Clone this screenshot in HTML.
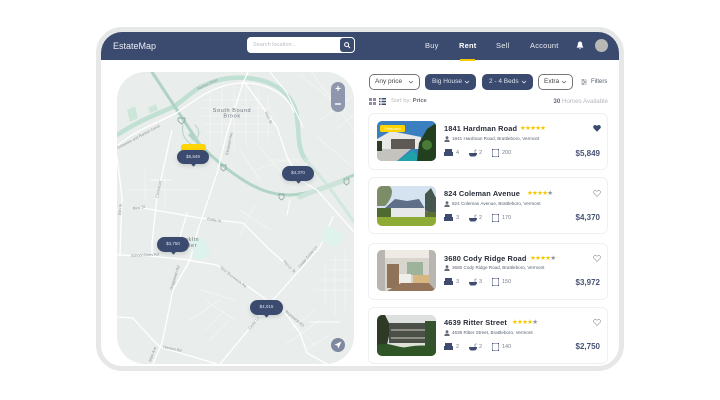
<!DOCTYPE html>
<html><head><meta charset="utf-8"><style>
*{box-sizing:border-box;margin:0;padding:0}
html,body{width:720px;height:400px;background:#fff;overflow:hidden;font-family:"Liberation Sans",sans-serif}
.a{position:absolute;white-space:nowrap}
#frame{left:96px;top:27px;width:528px;height:344px;border:5px solid #e6e8e7;border-radius:26px;background:#fff}
#hdr{left:101px;top:32px;width:518px;height:28px;background:#3b4a6f;border-radius:21px 21px 0 0}
.nav{color:#e8ebf2;font-size:7.5px;top:41px;letter-spacing:.2px}
.pill{top:74px;height:16px;border-radius:5px;font-size:6.5px;line-height:14px;padding-left:5px;border:1px solid #777;color:#444}
.pill.d{background:#3b4a6f;border-color:#3b4a6f;color:#dfe3ec;padding-left:6px}
.pill svg{position:absolute;right:5px;top:5px}
.card{left:368px;width:240px;height:57px;background:#fff;border:1px solid #eff0f2;border-radius:6px}
.t{left:444px;font-size:7.4px;font-weight:bold;color:#2a2e3a;letter-spacing:.12px}
.s{font-size:6.3px;letter-spacing:-.6px;color:#f5c800;line-height:8px}
.s i{color:#8b92a0;font-style:normal}
.ad{left:452px;font-size:4.6px;color:#5a6275}
.n{font-size:5.5px;color:#7a808c}
.p{right:120px;font-size:8px;font-weight:bold;color:#485375}
.im{left:377px;width:59px;border-radius:5px}
.pin{width:32px;height:15px;border-radius:7.5px;background:#3b4a6f;color:#dfe3ec;font-size:4.5px;text-align:center;line-height:14px;box-shadow:0 2px 4px #0002}
.pin:after{content:"";position:absolute;left:14.5px;bottom:-1.5px;width:3px;height:3px;background:#3b4a6f;transform:rotate(45deg)}
</style></head><body>
<div class="a" id="frame"></div>
<div class="a" id="hdr"></div>
<div class="a" style="left:113px;top:41px;font-size:9px;color:#e9ecf3">EstateMap</div>
<div class="a" style="left:247px;top:37px;width:108px;height:16px;background:#fff;border-radius:4px"></div>
<div class="a" style="left:253px;top:42px;font-size:5.6px;color:#b9bcc4">Search location...</div>
<div class="a" style="left:340px;top:38px;width:14px;height:14px;background:#3b4a6f;border-radius:3px"></div>
<svg class="a" style="left:343px;top:41px" width="8" height="8" viewBox="0 0 8 8"><circle cx="3.6" cy="3.6" r="2" fill="none" stroke="#fff"/><path d="M5 5l2 2" stroke="#fff"/></svg>
<div class="a nav" style="left:425px">Buy</div>
<div class="a nav" style="left:459px;font-weight:bold;color:#fff">Rent</div>
<div class="a nav" style="left:496px">Sell</div>
<div class="a nav" style="left:530px">Account</div>
<div class="a" style="left:460px;top:59px;width:15px;height:1.5px;background:#f5c800"></div>
<svg class="a" style="left:576px;top:41px" width="8" height="9" viewBox="0 0 8 9"><path d="M4 .5C2.4 .5 1.800 2 1.800 3.500 1.800 5 1 5.800 .6 6.600h6.800C7 5.800 6.200 5 6.200 3.500 6.200 2 5.600 .5 4 .5zM3 7.200h2l-1 1.300z" fill="#fff"/></svg>
<div class="a" style="left:595px;top:39px;width:13px;height:13px;border-radius:50%;background:#b8b8b6"></div>

<!-- MAP -->
<svg class="a" style="left:117px;top:72px;border-radius:28px" width="237" height="292" viewBox="117 72 237 292">
<rect x="117" y="72" width="237" height="292" fill="#e9edeb"/>
<g fill="none" stroke-linecap="round" stroke-linejoin="round">
<g stroke="#f4f6f5" stroke-width=".8">
<path d="M205 100h55M200 108h70M198 116h78M203 124h70M205 132h68M210 92v55M222 88v60M234 85v65M246 85v60M258 90v55M268 95v45"/>
<path d="M300 75l50 40M310 70l44 60M320 120l34-25M335 130l19-15M315 135l35 30"/>
<path d="M270 160h30M255 170l30-10M260 148l35 40M240 150l20 30"/>
<path d="M330 260h24M325 270h29M320 280h34M315 290h39M335 255v60M345 250v60M325 265v40"/>
<path d="M200 290l35 10M205 300l30 20M190 320l30-20M225 310l-20 20M210 340l20-20"/>
<path d="M290 330l25-20M285 345l35-25M305 350l25-15M290 320l25 25"/>
<path d="M145 170v30M165 175v30M130 190h70M240 210l30 20M255 205l-15 30"/>
</g>
<path d="M117 135C140 120 160 113 173 107C185 100 192 90 205 85C220 78 235 77 248 78C270 80 290 90 296 112C300 130 296 148 306 160" stroke="#bfe0d2" stroke-width="4.500"/>
<path d="M306 160C325 180 342 205 354 222" stroke="#d2e8df" stroke-width="3"/>
<path d="M152 72L200 145" stroke="#aed2c5" stroke-width="3"/>
<path d="M190 135C205 150 220 165 240 178C255 188 270 195 290 195C315 194 335 182 354 175" stroke="#b0d5c7" stroke-width="3"/>
<path d="M183 125C180 138 190 146 204 150M195 125C202 132 198 140 192 140" stroke="#b9d8cc" stroke-width="1.200"/>
<path d="M300 197C315 190 330 186 345 180" stroke="#cde4da" stroke-width="5"/>
<g stroke="#fff" stroke-width="1.300">
<path d="M117 146C135 130 160 122 178 112C195 100 210 88 232 84C255 80 285 88 294 112"/>
<path d="M248 72L243 83L227 133L217 173L198 230L190 260L173 290L162 343L153 364"/>
<path d="M245 83L277 127L287 157L300 180L317 190L354 232"/>
<path d="M172 130L157 197L152 243L152 256"/>
<path d="M117 255L150 256L190 260"/>
<path d="M137 207L200 218L243 223L270 250L293 270"/>
<path d="M187 260L217 265L267 300"/>
<path d="M333 217L320 247L273 300L220 364"/>
<path d="M283 310L300 333L307 353L327 364"/>
<path d="M117 317L133 318L150 337L160 347L217 364"/>
<path d="M117 157L122 197L120 255"/>
<path d="M187 213L180 237"/>
<path d="M150 180L172 180" stroke-width=".8"/>
<path d="M270 72L287 93L303 127" stroke-width="1"/>
<path d="M310 322h30M290 200l-3 15" stroke-width="1"/>
</g>
</g>
<path d="M192 240C200 235 208 240 210 250C212 258 200 262 193 258Z" fill="#ddf2ec"/>
<path d="M127 110l8-4 3 12-8 4zM148 108l8-4 2 6-8 3z" fill="#cde6da"/>
<path d="M327 225l18 10-8 12-16-6z" fill="#dff2ec"/>
<g fill="#70787f" font-family="Liberation Sans" font-size="5.500" letter-spacing=".6" text-anchor="middle">
<text x="232" y="112">South Bound</text><text x="232" y="117.500">Brook</text>
<text x="187" y="241">Franklin</text><text x="187" y="247">Center</text>
</g>
<g fill="#8c9499" font-family="Liberation Sans" font-size="3.800">
<text transform="translate(198 90) rotate(-25)">Raritan River</text>
<text transform="translate(118 149) rotate(-28)">Delaware and Raritan Canal</text>
<text transform="translate(265 112) rotate(68)">Main St</text>
<text transform="translate(228 155) rotate(-78)">Elizabeth Ave</text>
<text transform="translate(158 198) rotate(-78)">Claremont</text>
<text transform="translate(121 215) rotate(-85)">Elm St</text>
<text transform="translate(133 210) rotate(-10)">Pine St</text>
<text transform="translate(207 220) rotate(10)">Battle St</text>
<text transform="translate(131 257) rotate(-3)">School Pines Rd</text>
<text transform="translate(220 268) rotate(38)">New Brunswick Rd</text>
<text transform="translate(172 290) rotate(-72)">Griggstown Rd</text>
<text transform="translate(283 262) rotate(45)">Pierce St</text>
<text transform="translate(300 268) rotate(-50)">Cedar Grove Ln</text>
<text transform="translate(250 330) rotate(-52)">Cedar Ln</text>
<text transform="translate(285 312) rotate(40)">Brunswick Rd</text>
<text transform="translate(163 348) rotate(12)">Weston Rd</text>
<text transform="translate(151 362) rotate(-70)">Main Ave</text>
</g>
<g fill="none" stroke="#7d9c90" stroke-width=".7"><path d="M178 118h7v3l-3.500 3-3.500-3z"/><path d="M221 165h5v4l-2.500 2-2.500-2zM279 194h5v4l-2.500 2-2.500-2zM344 179h5v4l-2.500 2-2.500-2z"/></g>
</svg>

<div class="a" style="left:331px;top:82px;width:14px;height:30px;border-radius:7px;background:#8f97ae"></div>
<div class="a" style="left:331px;top:83px;width:14px;text-align:center;color:#fff;font-size:10px;font-weight:bold;line-height:13px">+</div>
<div class="a" style="left:335px;top:103px;width:6px;height:1.500px;background:#dde0e8"></div>
<div class="a" style="left:331px;top:338px;width:14px;height:14px;border-radius:50%;background:#7f88a1"></div>
<svg class="a" style="left:334px;top:341px" width="8" height="8" viewBox="0 0 8 8"><path d="M7.500 .5L.5 3.800l3 .8 .8 3z" fill="#fff"/></svg>

<div class="a" style="left:181px;top:144px;width:25px;height:8px;background:#ffd400;border-radius:3px 3px 0 0"></div>
<div class="a pin" style="left:177px;top:150px;height:14px;line-height:13px">$5,849</div>
<div class="a pin" style="left:282px;top:166px">$4,370</div>
<div class="a pin" style="left:157px;top:237px">$3,750</div>
<div class="a pin" style="left:250px;top:300px;width:33px">$4,015</div>

<div class="a pill" style="left:369px;width:51px">Any price<svg width="6" height="4" viewBox="0 0 6 4"><path d="M1 1l2 2 2-2" fill="none" stroke="#555" stroke-width=".7"/></svg></div>
<div class="a pill d" style="left:425px;width:51px">Big House<svg width="6" height="4" viewBox="0 0 6 4"><path d="M1 1l2 2 2-2" fill="none" stroke="#fff" stroke-width=".7"/></svg></div>
<div class="a pill d" style="left:482px;width:51px">2 - 4 Beds<svg width="6" height="4" viewBox="0 0 6 4"><path d="M1 1l2 2 2-2" fill="none" stroke="#fff" stroke-width=".7"/></svg></div>
<div class="a pill" style="left:538px;width:35px">Extra<svg width="6" height="4" viewBox="0 0 6 4"><path d="M1 1l2 2 2-2" fill="none" stroke="#555" stroke-width=".7"/></svg></div>
<svg class="a" style="left:581px;top:79px" width="6" height="6" viewBox="0 0 6 6"><path d="M0 1h6M0 3h6M0 5h6" stroke="#778" stroke-width=".5"/><path d="M2 0v2M4 2v2M2 4v2" stroke="#667" stroke-width=".8"/></svg>
<div class="a" style="left:591px;top:79px;font-size:6px;color:#555c6b">Filters</div>
<svg class="a" style="left:369px;top:98px" width="18" height="8" viewBox="0 0 18 8"><path d="M0 0h3v3H0zM4 0h3v3H4zM0 4h3v3H0zM4 4h3v3H4z" fill="#8a8f99"/><path d="M10 0h1.500v1.500H10zM12.500 0H17v1.500h-4.500zM10 2.800h1.500v1.500H10zM12.500 2.800H17v1.500h-4.500zM10 5.500h1.500V7H10zM12.500 5.500H17V7h-4.500z" fill="#3b4a6f"/></svg>
<div class="a" style="left:391px;top:98px;font-size:5.800px;color:#b5b8bf">Sort by: <b style="color:#666c78">Price</b></div>
<div class="a" style="right:112px;top:98px;font-size:6.200px;color:#b5b8bf"><b style="color:#666c78">30</b> Homes Available</div>

<div class="a card" style="top:113px"></div>
<div class="a card" style="top:177px"></div>
<div class="a card" style="top:243px"></div>
<div class="a card" style="top:307px"></div>

<svg class="a im" style="top:121px" width="59" height="40" viewBox="0 0 59 40"><rect width="59" height="40" fill="#3a7fc0"/><path d="M0 18L14 10L44 16V28H0z" fill="#e8e8e6"/><rect x="14" y="18" width="24" height="10" fill="#5d5a55"/><path d="M0 28H34L20 40H0z" fill="#c5c3bd"/><path d="M20 40L36 29L44 40z" fill="#1fa3a8"/><path d="M40 40L42 22L50 8L59 2V40z" fill="#22401f"/><circle cx="50" cy="24" r="5" fill="#4a7a38"/><path d="M0 20h5v10H0z" fill="#2e3b28"/></svg>
<div class="a" style="left:380px;top:125px;width:25px;height:7px;border-radius:1.500px;background:#ffd400;color:#fff;font-size:4px;text-align:center;line-height:7px">Featured</div>
<svg class="a im" style="top:186px" width="59" height="40" viewBox="0 0 59 40"><rect width="59" height="40" fill="#d5e2ef"/><path d="M0 0H12C18 4 14 14 8 20H0z" fill="#7c8c68"/><path d="M48 25V8L54 2L59 12V28z" fill="#45584f"/><path d="M8 22L18 13L30 15L42 13L50 26V30H8z" fill="#5f6f88"/><rect x="14" y="22" width="34" height="9" fill="#e6e8ea"/><path d="M0 22h14v10H0z" fill="#4f6a33"/><rect x="48" y="26" width="11" height="6" fill="#5a7035"/><rect y="31" width="59" height="9" fill="#8eab36"/></svg>
<svg class="a im" style="top:250px" width="59" height="41" viewBox="0 0 59 41"><rect width="59" height="41" fill="#d8d4ce"/><rect width="59" height="8" fill="#eeeae4"/><path d="M0 0h8V41H0zM52 0h7V41h-7z" fill="#b9b6b1"/><rect x="10" y="14" width="12" height="24" fill="#8f7357"/><rect x="30" y="12" width="16" height="13" fill="#9db39b"/><rect x="22" y="24" width="12" height="10" fill="#efeee9"/><rect x="36" y="25" width="16" height="9" fill="#d8b67f"/><path d="M10 41L24 33H52L59 41z" fill="#94755c"/></svg>
<svg class="a im" style="top:315px" width="59" height="41" viewBox="0 0 59 41"><rect width="59" height="41" fill="#dde0de"/><path d="M0 0h8l6 12-4 18H0z" fill="#2e3a25"/><rect x="12" y="8" width="40" height="20" fill="#4a4f47"/><rect x="14" y="14" width="36" height="2" fill="#8f8f86"/><rect x="14" y="22" width="36" height="2" fill="#8f8f86"/><rect x="16" y="28" width="30" height="6" fill="#dfe0d8"/><path d="M48 6h11v35H48z" fill="#33522d"/><path d="M0 30C12 26 22 34 30 32C40 30 50 30 59 32V41H0z" fill="#2f5426"/></svg>

<div class="a t" style="top:124px">1841 Hardman Road</div>
<div class="a s" style="left:520px;top:124.500px">★★★★★</div>
<svg class="a" style="left:593px;top:125px" width="8" height="7" viewBox="0 0 8 7"><path d="M4 6.800L.6 3.300C-.5 1.800 .7 0 2.200 0 3 0 3.600 .4 4 1 4.400 .4 5 0 5.800 0c1.500 0 2.700 1.800 1.600 3.300z" fill="#3b4a6f"/></svg>
<div class="a ad" style="top:136px">1841 Hardman Road, Brattleboro, Vermont</div>
<div class="a t" style="top:189px">824 Coleman Avenue</div>
<div class="a s" style="left:527px;top:189.500px">★★★★<i>★</i></div>
<svg class="a" style="left:593px;top:190px" width="8" height="7" viewBox="0 0 8 7"><path d="M4 6.500L.8 3.200C0 1.900 1 .4 2.200 .4 3 .4 3.600 .8 4 1.400 4.400 .8 5 .4 5.800 .4 7 .4 8 1.900 7.200 3.200z" fill="none" stroke="#555" stroke-width=".5"/></svg>
<div class="a ad" style="top:201px">824 Coleman Avenue, Brattleboro, Vermont</div>
<div class="a t" style="top:254px">3680 Cody Ridge Road</div>
<div class="a s" style="left:530px;top:254.500px">★★★★<i>★</i></div>
<svg class="a" style="left:593px;top:255px" width="8" height="7" viewBox="0 0 8 7"><path d="M4 6.500L.8 3.200C0 1.900 1 .4 2.200 .4 3 .4 3.600 .8 4 1.400 4.400 .8 5 .4 5.800 .4 7 .4 8 1.900 7.200 3.200z" fill="none" stroke="#555" stroke-width=".5"/></svg>
<div class="a ad" style="top:265px">3680 Cody Ridge Road, Brattleboro, Vermont</div>
<div class="a t" style="top:318px">4639 Ritter Street</div>
<div class="a s" style="left:512px;top:318.500px">★★★★<i>★</i></div>
<svg class="a" style="left:593px;top:319px" width="8" height="7" viewBox="0 0 8 7"><path d="M4 6.500L.8 3.200C0 1.900 1 .4 2.200 .4 3 .4 3.600 .8 4 1.400 4.400 .8 5 .4 5.800 .4 7 .4 8 1.900 7.200 3.200z" fill="none" stroke="#555" stroke-width=".5"/></svg>
<div class="a ad" style="top:330px">4639 Ritter Street, Brattleboro, Vermont</div>

<svg class="a" style="left:444px;top:136px" width="6" height="6" viewBox="0 0 6 6"><circle cx="3" cy="1.600" r="1.400" fill="#667"/><path d="M.3 6C.5 4 1.500 3.500 3 3.500S5.500 4 5.700 6z" fill="#667"/></svg>
<svg class="a" style="left:444px;top:201px" width="6" height="6" viewBox="0 0 6 6"><circle cx="3" cy="1.600" r="1.400" fill="#667"/><path d="M.3 6C.5 4 1.500 3.500 3 3.500S5.500 4 5.700 6z" fill="#667"/></svg>
<svg class="a" style="left:444px;top:265px" width="6" height="6" viewBox="0 0 6 6"><circle cx="3" cy="1.600" r="1.400" fill="#667"/><path d="M.3 6C.5 4 1.500 3.500 3 3.500S5.500 4 5.700 6z" fill="#667"/></svg>
<svg class="a" style="left:444px;top:330px" width="6" height="6" viewBox="0 0 6 6"><circle cx="3" cy="1.600" r="1.400" fill="#667"/><path d="M.3 6C.5 4 1.500 3.500 3 3.500S5.500 4 5.700 6z" fill="#667"/></svg>

<svg class="a" style="left:444px;top:148px" width="70" height="10" viewBox="0 0 70 10"><path d="M1 1h7v3h-7zM0 4h9v4H0z" fill="#3f4c70"/><path d="M25 5h8c0 2-1 3.500-3 3.500h-3C26 8.500 25 7 25 5z" fill="#3f4c70"/><path d="M31 5V2h1.500" stroke="#3f4c70" stroke-width=".5" fill="none"/><path d="M49 1.500h5M49 8.500h5M48.500 2v6M54.500 2v6" stroke="#3f4c70" stroke-width=".5" fill="none"/><path d="M48 1h1v1h-1zM54 1h1v1h-1zM48 8h1v1h-1zM54 8h1v1h-1z" fill="#3f4c70"/></svg>
<div class="a n" style="left:456px;top:150px">4</div><div class="a n" style="left:479px;top:150px">2</div><div class="a n" style="left:502px;top:150px">200</div>
<div class="a p" style="top:148.500px">$5,849</div>
<svg class="a" style="left:444px;top:213px" width="70" height="10" viewBox="0 0 70 10"><path d="M1 1h7v3h-7zM0 4h9v4H0z" fill="#3f4c70"/><path d="M25 5h8c0 2-1 3.500-3 3.500h-3C26 8.500 25 7 25 5z" fill="#3f4c70"/><path d="M31 5V2h1.500" stroke="#3f4c70" stroke-width=".5" fill="none"/><path d="M49 1.500h5M49 8.500h5M48.500 2v6M54.500 2v6" stroke="#3f4c70" stroke-width=".5" fill="none"/><path d="M48 1h1v1h-1zM54 1h1v1h-1zM48 8h1v1h-1zM54 8h1v1h-1z" fill="#3f4c70"/></svg>
<div class="a n" style="left:456px;top:215px">3</div><div class="a n" style="left:479px;top:215px">2</div><div class="a n" style="left:502px;top:215px">170</div>
<div class="a p" style="top:213px">$4,370</div>
<svg class="a" style="left:444px;top:277px" width="70" height="10" viewBox="0 0 70 10"><path d="M1 1h7v3h-7zM0 4h9v4H0z" fill="#3f4c70"/><path d="M25 5h8c0 2-1 3.500-3 3.500h-3C26 8.500 25 7 25 5z" fill="#3f4c70"/><path d="M31 5V2h1.500" stroke="#3f4c70" stroke-width=".5" fill="none"/><path d="M49 1.500h5M49 8.500h5M48.500 2v6M54.500 2v6" stroke="#3f4c70" stroke-width=".5" fill="none"/><path d="M48 1h1v1h-1zM54 1h1v1h-1zM48 8h1v1h-1zM54 8h1v1h-1z" fill="#3f4c70"/></svg>
<div class="a n" style="left:456px;top:279px">3</div><div class="a n" style="left:479px;top:279px">3</div><div class="a n" style="left:502px;top:279px">150</div>
<div class="a p" style="top:277.500px">$3,972</div>
<svg class="a" style="left:444px;top:342px" width="70" height="10" viewBox="0 0 70 10"><path d="M1 1h7v3h-7zM0 4h9v4H0z" fill="#3f4c70"/><path d="M25 5h8c0 2-1 3.500-3 3.500h-3C26 8.500 25 7 25 5z" fill="#3f4c70"/><path d="M31 5V2h1.500" stroke="#3f4c70" stroke-width=".5" fill="none"/><path d="M49 1.500h5M49 8.500h5M48.500 2v6M54.500 2v6" stroke="#3f4c70" stroke-width=".5" fill="none"/><path d="M48 1h1v1h-1zM54 1h1v1h-1zM48 8h1v1h-1zM54 8h1v1h-1z" fill="#3f4c70"/></svg>
<div class="a n" style="left:456px;top:344px">2</div><div class="a n" style="left:479px;top:344px">2</div><div class="a n" style="left:502px;top:344px">140</div>
<div class="a p" style="top:342px">$2,750</div>
</body></html>
